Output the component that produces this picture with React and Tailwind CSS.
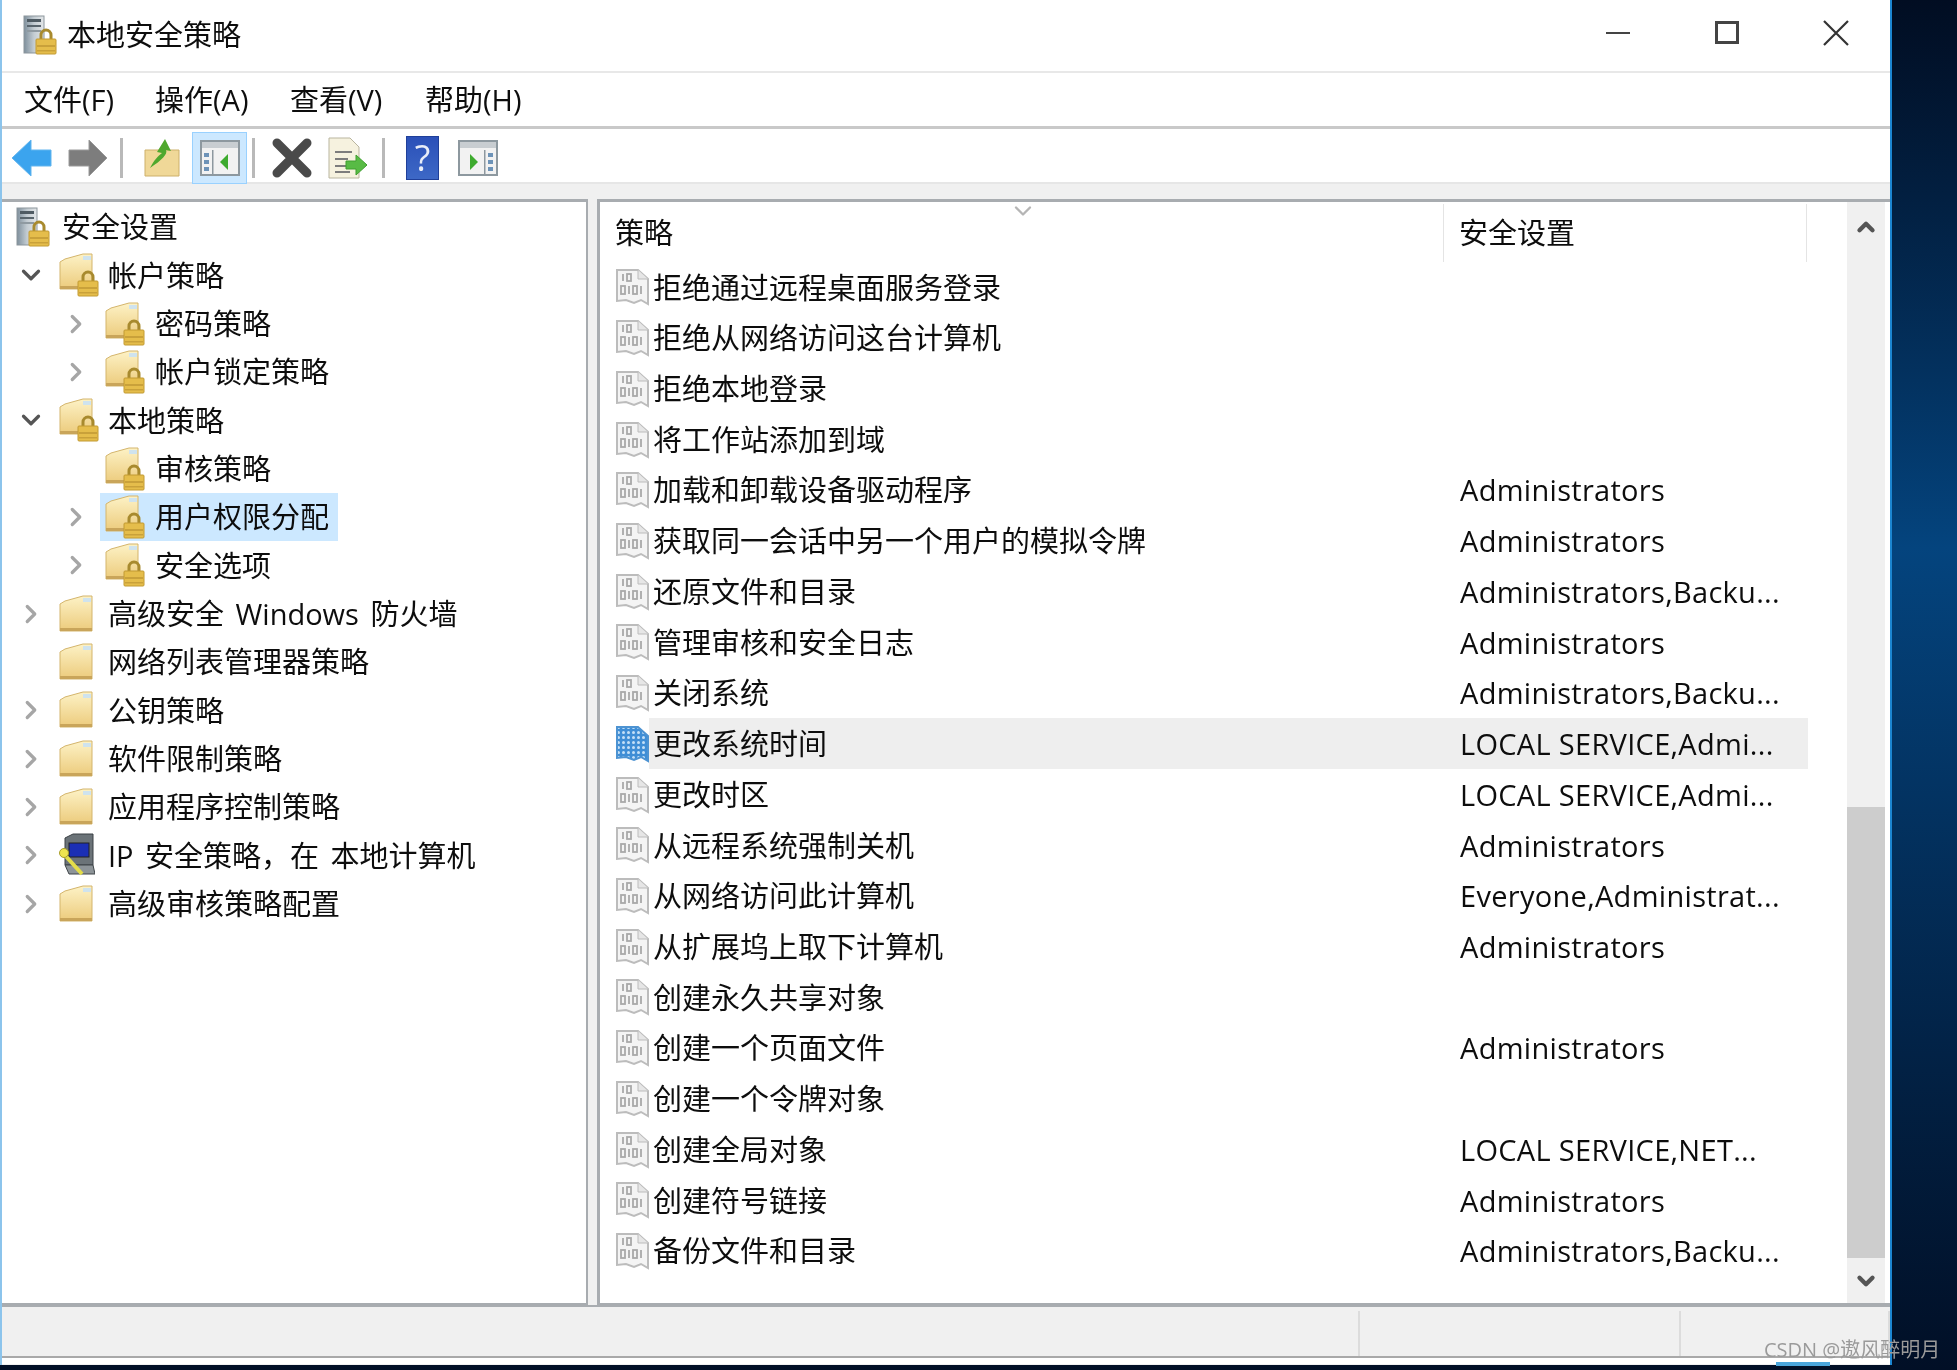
import React from 'react';
import { ChevronRight, ChevronDown, ChevronUp } from 'lucide-react';

const LockShape = ({ x, y }) => (
  <g transform={`translate(${x} ${y})`}>
    <path d="M5 10V6a5 5 0 0 1 10 0v4" fill="none" stroke="#a88a2e" strokeWidth="3" />
    <rect x="0" y="10" width="20" height="15" rx="1" fill="#e5bd4b" stroke="#c29a33" />
    <rect x="1" y="16" width="18" height="2" fill="#c9a13a" />
    <rect x="1" y="21" width="18" height="1.5" fill="#c9a13a" />
  </g>
);

const ServerLockIcon = () => (
  <svg width="34" height="40" viewBox="0 0 34 40" className="shrink-0">
    <defs>
      <linearGradient id="srv" x1="0" x2="1" y1="0" y2="0">
        <stop offset="0" stopColor="#7e8f9c" />
        <stop offset="0.5" stopColor="#c3ccd2" />
        <stop offset="1" stopColor="#e4e7e9" />
      </linearGradient>
    </defs>
    <rect x="1" y="1" width="20" height="37" fill="url(#srv)" stroke="#8b959c" />
    <rect x="4" y="4" width="14" height="3" fill="#4f5b63" />
    <rect x="4" y="10" width="14" height="2" fill="#59656d" />
    <rect x="4" y="15" width="14" height="2" fill="#8f9aa1" />
    <LockShape x={13} y={14} />
  </svg>
);

const FolderShape = () => (
  <>
    <defs>
      <linearGradient id="fold" x1="0" x2="0" y1="0" y2="1">
        <stop offset="0" stopColor="#fdf2c6" />
        <stop offset="1" stopColor="#eccb7c" />
      </linearGradient>
    </defs>
    <path d="M1 9 L6 6 L24 1 L33 1 L33 36 L1 36 Z" fill="url(#fold)" stroke="#d4b56c" />
    <rect x="24" y="3" width="8" height="4" fill="#cfe3ee" />
    <rect x="1" y="33" width="32" height="3" fill="#c9a55a" />
  </>
);

const FolderIcon = () => (
  <svg width="34" height="38" viewBox="0 0 34 38" className="shrink-0">
    <FolderShape />
  </svg>
);

const FolderLockIcon = () => (
  <svg width="40" height="44" viewBox="0 0 40 44" className="shrink-0">
    <FolderShape />
    <LockShape x={19} y={18} />
  </svg>
);

const IpIcon = () => (
  <svg width="36" height="44" viewBox="0 0 36 44" className="shrink-0">
    <path d="M6 5 L14 1 L34 1 L34 32 L6 32 Z" fill="#6b7378" stroke="#3a4044" />
    <rect x="10" y="10" width="20" height="14" fill="#1b2fb5" stroke="#222" />
    <path d="M6 32 H34 L36 41 H10 Z" fill="#8d9498" stroke="#3f4549" />
    <path d="M3 19 L23 41" stroke="#e3dc4a" strokeWidth="4" />
    <circle cx="5" cy="20" r="4.5" fill="#eee34f" stroke="#a89e2b" />
  </svg>
);

const PolicyIcon = ({ active }) => {
  if (active) {
    return (
      <svg width="33" height="38" viewBox="0 0 33 38" className="shrink-0">
        <defs>
          <pattern id="dots" width="5" height="5" patternUnits="userSpaceOnUse">
            <rect width="5" height="5" fill="#3f8ed6" />
            <circle cx="2.5" cy="2.5" r="1.5" fill="#c4e0f7" />
          </pattern>
        </defs>
        <path d="M1 2 H22 L32 11 V36 L25 32 L18 35 L10 32 L1 33 Z" fill="url(#dots)" stroke="#4d93d2" strokeWidth="2" />
      </svg>
    );
  }
  return (
    <svg width="33" height="38" viewBox="0 0 33 38" className="shrink-0">
      <path d="M1 2 H22 L32 11 V36 L25 32 L18 35 L10 32 L1 33 Z" fill="#f4f4f4" stroke="#bcbcbc" strokeWidth="2" />
      <path d="M22 2 V11 H32" fill="#e6e6e6" stroke="#bcbcbc" />
      <g fill="none" stroke="#a9a9a9" strokeWidth="1.8">
        <path d="M7 6 V13" />
        <rect x="11" y="6" width="4" height="7" />
        <rect x="5" y="18" width="4" height="8" />
        <path d="M13 18 V26" />
        <rect x="17" y="18" width="4" height="8" />
        <path d="M25 18 V26" />
      </g>
    </svg>
  );
};

const ToolSep = ({ className }) => <div className={`w-[3px] h-[40px] bg-[#b9b9b9] shrink-0 ${className}`} />;

const Toolbar = () => (
  <div className="h-[55px] flex items-center border-b-2 border-[#e6e6e6] shrink-0 pt-[5px]">
    <svg width="42" height="40" viewBox="0 0 42 40" className="ml-[9px] shrink-0">
      <path d="M1 20 L20 2 V12 H40 V28 H20 V38 Z" fill="#3ba4ee" stroke="#63b5ee" />
    </svg>
    <svg width="40" height="40" viewBox="0 0 40 40" className="ml-[15px] shrink-0">
      <path d="M39 20 L21 2 V12 H1 V28 H21 V38 Z" fill="#7d7d7d" stroke="#9a9a9a" />
    </svg>
    <ToolSep className="ml-[12px]" />
    <svg width="36" height="40" viewBox="0 0 36 40" className="ml-[21px] shrink-0">
      <path d="M1 12 H35 V38 H1 Z" fill="#f0d898" stroke="#cdb06a" />
      <path d="M6 30 C10 22 14 18 18 15 L13 14 L21 1 L27 13 L22 12 C24 16 18 22 6 30 Z" fill="#4fa82e" />
    </svg>
    <div className="ml-[12px] w-[55px] h-[52px] bg-[#cce8ff] border border-[#99d1ff] flex items-center justify-center shrink-0">
      <svg width="40" height="36" viewBox="0 0 40 36">
        <rect x="1" y="1" width="38" height="34" fill="#f2f2f2" stroke="#8d989f" strokeWidth="2" />
        <rect x="2" y="2" width="36" height="6" fill="#c8cdd1" />
        <rect x="12" y="10" width="1.5" height="25" fill="#8d989f" />
        <rect x="4" y="13" width="5" height="4" fill="#6d93b8" />
        <rect x="4" y="20" width="5" height="4" fill="#6d93b8" />
        <rect x="4" y="27" width="5" height="4" fill="#6d93b8" />
        <path d="M28 14 V30 L20 22 Z" fill="#3eab2f" />
      </svg>
    </div>
    <ToolSep className="ml-[5px]" />
    <svg width="40" height="40" viewBox="0 0 40 40" className="ml-[17px] shrink-0">
      <path d="M5 5 L35 35 M35 5 L5 35" stroke="#4a4a4a" strokeWidth="9" strokeLinecap="round" />
    </svg>
    <svg width="40" height="42" viewBox="0 0 40 42" className="ml-[16px] shrink-0">
      <path d="M1 1 H22 L31 10 V41 H1 Z" fill="#f6f2df" stroke="#b9b59f" />
      <path d="M7 15 H24 M7 22 H20 M7 29 H20 M7 35 H22" stroke="#7d7d7d" strokeWidth="2" />
      <path d="M18 24 H28 V18 L39 28 L28 38 V32 H18 Z" fill="#58bb45" stroke="#3f9f2f" />
    </svg>
    <ToolSep className="ml-[14px]" />
    <div className="ml-[21px] w-[33px] h-[44px] bg-gradient-to-b from-[#2b50b8] to-[#3d68c6] border border-[#1f3f99] flex items-center justify-center text-[#e8edf8] text-[36px] leading-none shrink-0">
      ?
    </div>
    <svg width="40" height="36" viewBox="0 0 40 36" className="ml-[19px] shrink-0">
      <rect x="1" y="1" width="38" height="34" fill="#f2f2f2" stroke="#8d989f" strokeWidth="2" />
      <rect x="2" y="2" width="36" height="6" fill="#c8cdd1" />
      <rect x="26" y="10" width="1.5" height="25" fill="#8d989f" />
      <rect x="30" y="13" width="5" height="4" fill="#6d93b8" />
      <rect x="30" y="20" width="5" height="4" fill="#6d93b8" />
      <rect x="30" y="27" width="5" height="4" fill="#6d93b8" />
      <path d="M12 14 V30 L20 22 Z" fill="#3eab2f" />
    </svg>
  </div>
);

// level 0 = root, 1 = top group, 2 = child
const treeRows = [
  { label: '安全设置', level: 0, icon: 'server' },
  { label: '帐户策略', level: 1, icon: 'lock', arrow: 'down' },
  { label: '密码策略', level: 2, icon: 'lock', arrow: 'right' },
  { label: '帐户锁定策略', level: 2, icon: 'lock', arrow: 'right' },
  { label: '本地策略', level: 1, icon: 'lock', arrow: 'down' },
  { label: '审核策略', level: 2, icon: 'lock' },
  { label: '用户权限分配', level: 2, icon: 'lock', arrow: 'right', selected: true },
  { label: '安全选项', level: 2, icon: 'lock', arrow: 'right' },
  { label: '高级安全 Windows 防火墙', level: 1, icon: 'folder', arrow: 'right' },
  { label: '网络列表管理器策略', level: 1, icon: 'folder' },
  { label: '公钥策略', level: 1, icon: 'folder', arrow: 'right' },
  { label: '软件限制策略', level: 1, icon: 'folder', arrow: 'right' },
  { label: '应用程序控制策略', level: 1, icon: 'folder', arrow: 'right' },
  { label: 'IP 安全策略，在 本地计算机', level: 1, icon: 'ip', arrow: 'right' },
  { label: '高级审核策略配置', level: 1, icon: 'folder', arrow: 'right' },
];

const policies = [
  ['拒绝通过远程桌面服务登录', ''],
  ['拒绝从网络访问这台计算机', ''],
  ['拒绝本地登录', ''],
  ['将工作站添加到域', ''],
  ['加载和卸载设备驱动程序', 'Administrators'],
  ['获取同一会话中另一个用户的模拟令牌', 'Administrators'],
  ['还原文件和目录', 'Administrators,Backu...'],
  ['管理审核和安全日志', 'Administrators'],
  ['关闭系统', 'Administrators,Backu...'],
  ['更改系统时间', 'LOCAL SERVICE,Admi...'],
  ['更改时区', 'LOCAL SERVICE,Admi...'],
  ['从远程系统强制关机', 'Administrators'],
  ['从网络访问此计算机', 'Everyone,Administrat...'],
  ['从扩展坞上取下计算机', 'Administrators'],
  ['创建永久共享对象', ''],
  ['创建一个页面文件', 'Administrators'],
  ['创建一个令牌对象', ''],
  ['创建全局对象', 'LOCAL SERVICE,NET...'],
  ['创建符号链接', 'Administrators'],
  ['备份文件和目录', 'Administrators,Backu...'],
];

const TreeRow = ({ row }) => {
  const Arrow = row.arrow === 'down' ? ChevronDown : ChevronRight;
  const arrowColor = row.arrow === 'down' ? 'text-[#555555]' : 'text-[#a6a6a6]';
  const pad = row.level === 0 ? 'pl-[14px]' : row.level === 1 ? 'pl-[12px]' : 'pl-[57px]';
  const inner = row.level === 0 ? '' : row.level === 1 ? 'pl-[11px]' : 'ml-[7px] pl-[5px] pr-[9px]';
  const iconCol = row.level === 0 ? 'w-[46px]' : row.level === 1 ? 'w-[49px]' : 'w-[50px]';
  return (
    <div className={`h-[48.33px] flex items-center ${pad}`}>
      {row.level > 0 && (
        <div className="w-[34px] shrink-0 flex justify-center">
          {row.arrow && <Arrow size={30} strokeWidth={2.6} className={arrowColor} />}
        </div>
      )}
      <div className={`flex items-center h-[48px] ${row.selected ? 'bg-[#cce8ff]' : ''} ${inner}`}>
        <div className={`flex items-center ${iconCol}`}>
          {row.icon === 'server' && <ServerLockIcon />}
          {row.icon === 'lock' && <FolderLockIcon />}
          {row.icon === 'folder' && <FolderIcon />}
          {row.icon === 'ip' && <IpIcon />}
        </div>
        <span className="whitespace-nowrap [word-spacing:4px]">{row.label}</span>
      </div>
    </div>
  );
};

const PolicyRow = ({ name, value }) => {
  const active = name === '更改系统时间';
  return (
    <div className="h-[50.73px] flex items-center pl-[16px]">
      <PolicyIcon active={active} />
      <div className={`flex items-center h-full flex-1 ${active ? 'bg-[#eeeeee]' : ''}`}>
        <span className="w-[811px] pl-[4px] whitespace-nowrap shrink-0">{name}</span>
        <span className="whitespace-nowrap tracking-[0.3px]">{value}</span>
      </div>
    </div>
  );
};

export default function App() {
  return (
    <div
      className="relative w-[1957px] h-[1370px] overflow-hidden bg-gradient-to-b from-[#010d22] via-[#04447e] via-40% to-[#010f26] text-[29px] text-[#0d0d0d] blur-[0.7px]"
      style={{ fontFamily: '"Open Sans", "Noto Sans CJK SC", sans-serif' }}
    >
      <div className="w-[1892px] h-[1365px] flex flex-col bg-[#f0f0f0] border-r-2 border-[#1c86d1] border-l-2 border-l-[#8cc4ec]">
        {/* title bar */}
        <div className="h-[73px] shrink-0 bg-white flex items-center pb-[2px] border-b-2 border-[#e8e8e8]">
          <div className="ml-[21px] mr-[10px]">
            <ServerLockIcon />
          </div>
          <span>本地安全策略</span>
          <div className="ml-auto flex items-center mb-[4px]">
            <div className="w-[109px] flex justify-center">
              <div className="w-[24px] h-[2px] bg-[#444444]" />
            </div>
            <div className="w-[109px] flex justify-center">
              <div className="w-[24px] h-[23px] border-[3px] border-[#444444]" />
            </div>
            <div className="w-[109px] flex justify-center">
              <svg width="26" height="26" viewBox="0 0 26 26">
                <path d="M1 1 L25 25 M25 1 L1 25" stroke="#333333" strokeWidth="2.2" />
              </svg>
            </div>
          </div>
        </div>

        {/* menu bar */}
        <div className="h-[56px] shrink-0 bg-white flex items-center pl-[22px] border-b-[3px] border-[#c9c9c9]">
          <span className="w-[131px]">文件(F)</span>
          <span className="w-[135px]">操作(A)</span>
          <span className="w-[135px]">查看(V)</span>
          <span>帮助(H)</span>
        </div>

        <div className="bg-white shrink-0">
          <Toolbar />
        </div>

        <div className="h-[15px] shrink-0" />

        {/* panes */}
        <div className="h-[1106px] shrink-0 flex gap-[9px]">
          <div className="w-[586px] shrink-0 bg-white border-2 border-l-0 border-[#a8acb0] border-t-[3px] pt-[1px]">
            {treeRows.map((row) => (
              <TreeRow key={row.label} row={row} />
            ))}
          </div>

          <div className="flex-1 min-w-0 flex bg-white border-2 border-l-[3px] border-r-0 border-t-[3px] border-[#a8acb0]">
            <div className="flex-1 min-w-0">
              <div className="relative h-[60px] flex items-center pt-[2px]">
                <span className="w-[843px] pl-[15px] shrink-0">策略</span>
                <div className="w-px h-[58px] bg-[#e4e4e4] shrink-0" />
                <span className="w-[362px] pl-[15px] shrink-0">安全设置</span>
                <div className="w-px h-[58px] bg-[#e4e4e4] shrink-0" />
                <ChevronDown
                  size={28}
                  strokeWidth={2}
                  className="absolute left-[409px] top-[-5px] text-[#b5b5b5]"
                />
              </div>
              <div className="w-[1208px]">
                {policies.map(([name, value]) => (
                  <PolicyRow key={name} name={name} value={value} />
                ))}
              </div>
            </div>

            {/* scrollbar */}
            <div className="w-[38px] shrink-0 bg-[#f0f0f0] flex flex-col items-center mr-[5px]">
              <ChevronUp size={26} strokeWidth={4} className="text-[#555555] mt-[12px]" />
              <div className="h-[451px] w-full mt-[567px] bg-[#cdcdcd]" />
              <ChevronDown size={26} strokeWidth={4} className="text-[#555555] mt-[10px]" />
            </div>
          </div>
        </div>

        {/* status bar */}
        <div className="h-[53px] shrink-0 flex border-y-2 border-t-[#a8acb0] border-b-[#a9a9a9]">
          <div className="w-[1358px] border-r-2 border-[#dcdcdc] mt-[4px]" />
          <div className="w-[321px] border-r-2 border-[#dcdcdc] mt-[4px]" />
          <div className="flex-1 border-r-2 border-[#dcdcdc] mt-[4px]" />
        </div>
        <div className="h-[6px] shrink-0 bg-white" />
      </div>

      {/* taskbar highlight peeking out below the window */}
      <div className="absolute left-[1776px] top-[1362px] w-[54px] h-[4px] bg-[#4aa6dc]" />

      <div className="absolute left-[1764px] top-[1338px] text-[20px] leading-[24px] text-[#9a9a9a] whitespace-nowrap">
        CSDN @遨风醉明月
      </div>
    </div>
  );
}
